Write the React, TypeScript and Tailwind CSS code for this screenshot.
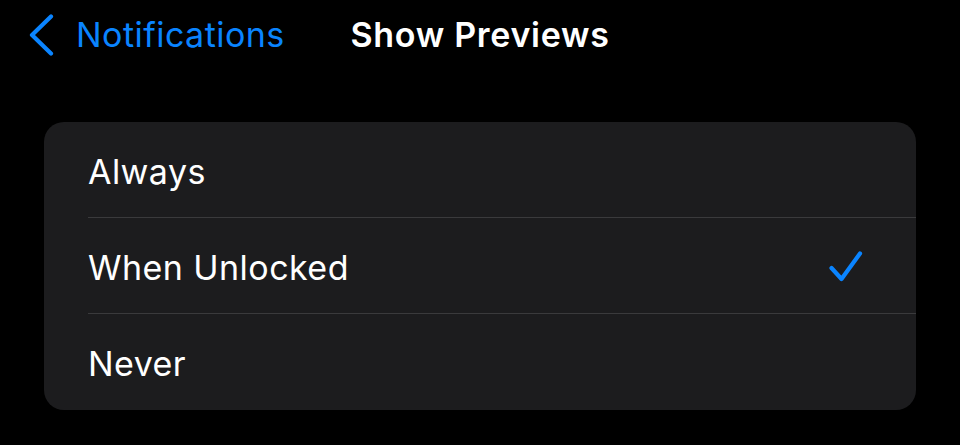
const options = ["Always", "When Unlocked", "Never"]

function Chevron() {
  return (
    <svg width="26" height="42" viewBox="0 0 26 42" fill="none">
      <path d="M23 2.5 L4 21 L23 39.5" stroke="#0a84ff" strokeWidth="4.2" strokeLinecap="round" strokeLinejoin="round" />
    </svg>
  )
}

function Check() {
  return (
    <svg width="36" height="34" viewBox="0 0 36 34" fill="none">
      <path d="M3.5 18 L13.5 29 L32 3.5" stroke="#0a84ff" strokeWidth="4.2" strokeLinecap="round" strokeLinejoin="round" />
    </svg>
  )
}

export default function App() {
  const selected = "When Unlocked"

  return (
    <div className="w-[960px] h-[445px] bg-black overflow-hidden" style={{ fontFamily: "Inter, 'Liberation Sans', sans-serif" }}>
      <div className="grid grid-cols-[1fr_auto_1fr] items-center h-[72px] pb-[3px]">
        <div className="flex items-center pl-[28px] gap-[22px] text-[#0a84ff] text-[34px] tracking-[0.45px]">
          <Chevron />
          <span>Notifications</span>
        </div>
        <div className="text-white text-[34px] font-semibold tracking-[0.7px]">Show Previews</div>
        <div />
      </div>

      <div className="mx-[44px] mt-[50px] bg-[#1c1c1e] rounded-[20px] overflow-hidden">
        {options.map((opt, i) => (
          <div key={opt} className="pl-[44px]">
            <div
              className={
                "flex items-center justify-between h-[96px] pt-[3px] pr-[52px] " +
                (i < options.length - 1 ? "border-b border-[#3a3a3c]" : "")
              }
            >
              <span className="text-white text-[34px] tracking-[0.45px]">{opt}</span>
              {opt === selected && <Check />}
            </div>
          </div>
        ))}
      </div>
    </div>
  )
}
